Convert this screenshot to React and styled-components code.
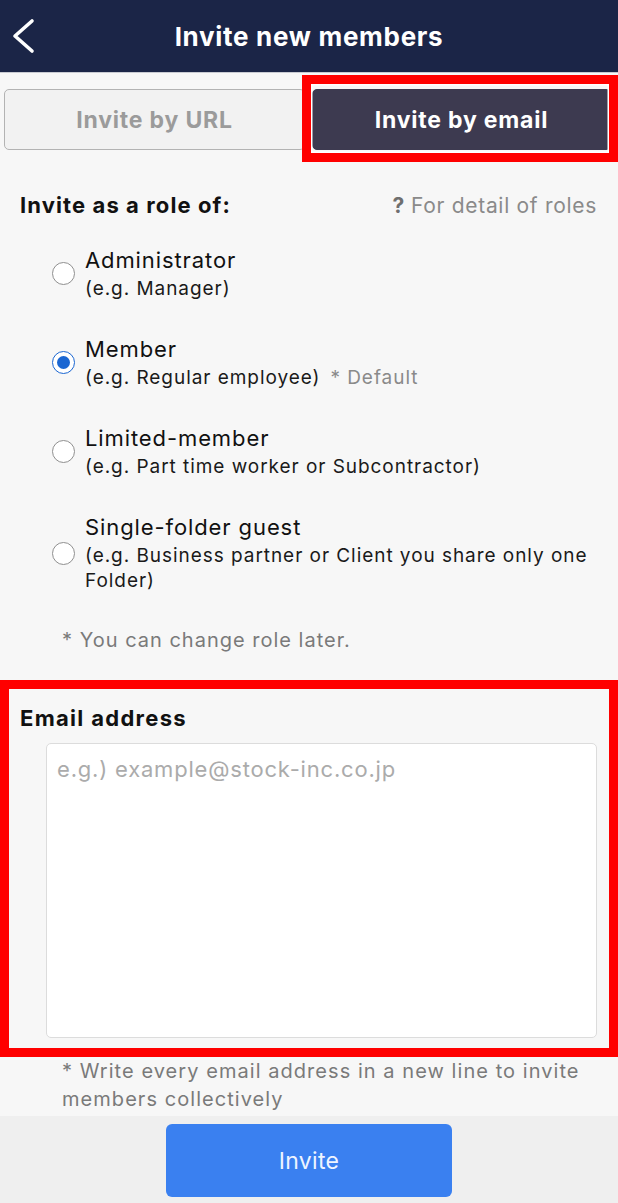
import React from 'react'
import styled, { createGlobalStyle } from 'styled-components'

const Global = createGlobalStyle`
  * { box-sizing: border-box; }
  body {
    margin: 0;
    background: #f7f7f7;
    font-family: Inter, "Noto Sans", sans-serif;
  }
`

const Screen = styled.div`
  width: 618px;
  height: 1203px;
  display: flex;
  flex-direction: column;
  background: #f7f7f7;
  overflow: hidden;
`

const Header = styled.header`
  height: 73px;
  flex-shrink: 0;
  background: #1b2547;
  border-bottom: 1px solid #c9cbd2;
  display: grid;
  grid-template-columns: 70px 1fr 70px;
  align-items: center;
`
const Back = styled.div`
  display: flex;
  align-items: center;
  padding-left: 10px;
`
const Title = styled.h1`
  margin: 0;
  text-align: center;
  color: #fff;
  font-size: 26px;
  font-weight: 700;
  letter-spacing: 0.7px;
`

const Tabs = styled.div`
  display: grid;
  grid-template-columns: 301px 299px;
  gap: 7px;
  padding: 16px 7px 0 4px;
`
const TabSlot = styled.div`
  position: relative;
`
const Tab = styled.div`
  height: 61px;
  border-radius: 5px;
  display: flex;
  align-items: center;
  justify-content: center;
  font-size: 23px;
  font-weight: 700;
  letter-spacing: 0.8px;
  background: ${({ active }) => (active ? '#3d3a50' : '#f2f2f2')};
  border: 1px solid ${({ active }) => (active ? '#3d3a50' : '#b3b3b3')};
  color: ${({ active }) => (active ? '#fff' : '#9b9b9b')};
`

const Highlight = styled.div`
  position: absolute;
  top: ${({ t }) => t}px;
  right: ${({ r }) => r}px;
  bottom: ${({ b }) => b}px;
  left: ${({ l }) => l}px;
  border: 9px solid #ff0000;
  box-shadow: ${({ inner }) => (inner ? 'inset 0 0 0 1.5px #fff' : 'none')};
  pointer-events: none;
`

const Roles = styled.section`
  padding: 42px 21px 0 20px;
`
const RolesHead = styled.div`
  display: flex;
  justify-content: space-between;
  align-items: center;
  height: 26px;
`
const Heading = styled.h2`
  margin: 0;
  font-size: 22px;
  font-weight: 700;
  letter-spacing: 1.1px;
  color: #111;
`
const DetailLink = styled.span`
  font-size: 21px;
  letter-spacing: 0.7px;
  color: #8a8a8a;
  b {
    color: #6f6f6f;
    margin-right: 6px;
  }
`

const RoleList = styled.div`
  display: flex;
  flex-direction: column;
  gap: 34px;
  margin-top: 28px;
  padding-left: 32px;
`
const Role = styled.label`
  display: flex;
  align-items: center;
  gap: 10px;
`
const Radio = styled.span`
  width: 23px;
  height: 23px;
  flex-shrink: 0;
  border-radius: 50%;
  background: #fff;
  border: 1.5px solid ${({ checked }) => (checked ? '#1a66d2' : '#8f8f8f')};
  display: flex;
  align-items: center;
  justify-content: center;
  &::after {
    content: '';
    display: ${({ checked }) => (checked ? 'block' : 'none')};
    width: 13px;
    height: 13px;
    border-radius: 50%;
    background: #1a66d2;
  }
`
const RoleText = styled.div`
  display: flex;
  flex-direction: column;
`
const RoleName = styled.span`
  font-size: 22px;
  line-height: 28px;
  letter-spacing: 0.9px;
  color: #111;
`
const RoleNote = styled.span`
  margin-top: 2px;
  font-size: 19px;
  line-height: 25px;
  letter-spacing: 0.95px;
  color: #1a1a1a;
  em {
    font-style: normal;
    color: #8a8a8a;
    margin-left: 10px;
  }
`

const Note = styled.p`
  margin: 33px 0 0 42px;
  font-size: 20px;
  line-height: 28px;
  letter-spacing: 1px;
  color: #7a7a7a;
`

const EmailSection = styled.section`
  position: relative;
  margin-top: 26px;
  padding: 25px 21px 19px 20px;
`
const Label = styled.div`
  font-size: 22px;
  font-weight: 700;
  line-height: 26px;
  letter-spacing: 1.3px;
  color: #111;
`
const Area = styled.textarea`
  display: block;
  width: 551px;
  height: 295px;
  margin: 12px 0 0 26px;
  padding: 10px 10px;
  resize: none;
  border: 1px solid #dcdcdc;
  border-radius: 5px;
  background: #fff;
  font-family: inherit;
  font-size: 22px;
  line-height: 30px;
  letter-spacing: 0.8px;
  color: #333;
  &::placeholder {
    color: #ababab;
  }
`

const Hint = styled.p`
  margin: 0;
  padding: 0 30px 3px 62px;
  font-size: 20px;
  line-height: 28px;
  letter-spacing: 1.05px;
  color: #7a7a7a;
`

const Footer = styled.footer`
  flex: 1;
  background: #efefef;
  display: flex;
  justify-content: center;
  padding-top: 8px;
`
const InviteButton = styled.button`
  width: 286px;
  height: 73px;
  border: none;
  border-radius: 6px;
  background: #3a80f0;
  color: #eef4ff;
  font-family: inherit;
  font-size: 23px;
  letter-spacing: 0.3px;
`

const roles = [
  { name: 'Administrator', note: '(e.g. Manager)' },
  { name: 'Member', note: '(e.g. Regular employee)', def: true, checked: true },
  { name: 'Limited-member', note: '(e.g. Part time worker or Subcontractor)' },
  { name: 'Single-folder guest', note: '(e.g. Business partner or Client you share only one Folder)' },
]

const App = () => {
  return (
    <Screen>
      <Global />
      <Header>
        <Back>
          <svg width="26" height="36" viewBox="0 0 26 36">
            <polyline points="22,3 5,18 22,33" fill="none" stroke="#fff" strokeWidth="3.6" strokeLinecap="round" strokeLinejoin="round" />
          </svg>
        </Back>
        <Title>Invite new members</Title>
        <div />
      </Header>

      <Tabs>
        <TabSlot>
          <Tab>Invite by URL</Tab>
        </TabSlot>
        <TabSlot>
          <Tab active>Invite by email</Tab>
          <Highlight inner t={-14} r={-7} b={-12} l={-10} />
        </TabSlot>
      </Tabs>

      <Roles>
        <RolesHead>
          <Heading>Invite as a role of:</Heading>
          <DetailLink><b>?</b>For detail of roles</DetailLink>
        </RolesHead>
        <RoleList>
          {roles.map((r) => (
            <Role key={r.name}>
              <Radio checked={r.checked} />
              <RoleText>
                <RoleName>{r.name}</RoleName>
                <RoleNote>
                  {r.note}
                  {r.def && <em>* Default</em>}
                </RoleNote>
              </RoleText>
            </Role>
          ))}
        </RoleList>
        <Note>* You can change role later.</Note>
      </Roles>

      <EmailSection>
        <Label>Email address</Label>
        <Area placeholder="e.g.) example@stock-inc.co.jp" />
        <Highlight t={0} r={0} b={0} l={0} />
      </EmailSection>

      <Hint>* Write every email address in a new line to invite members collectively</Hint>

      <Footer>
        <InviteButton>Invite</InviteButton>
      </Footer>
    </Screen>
  )
}

export default App
